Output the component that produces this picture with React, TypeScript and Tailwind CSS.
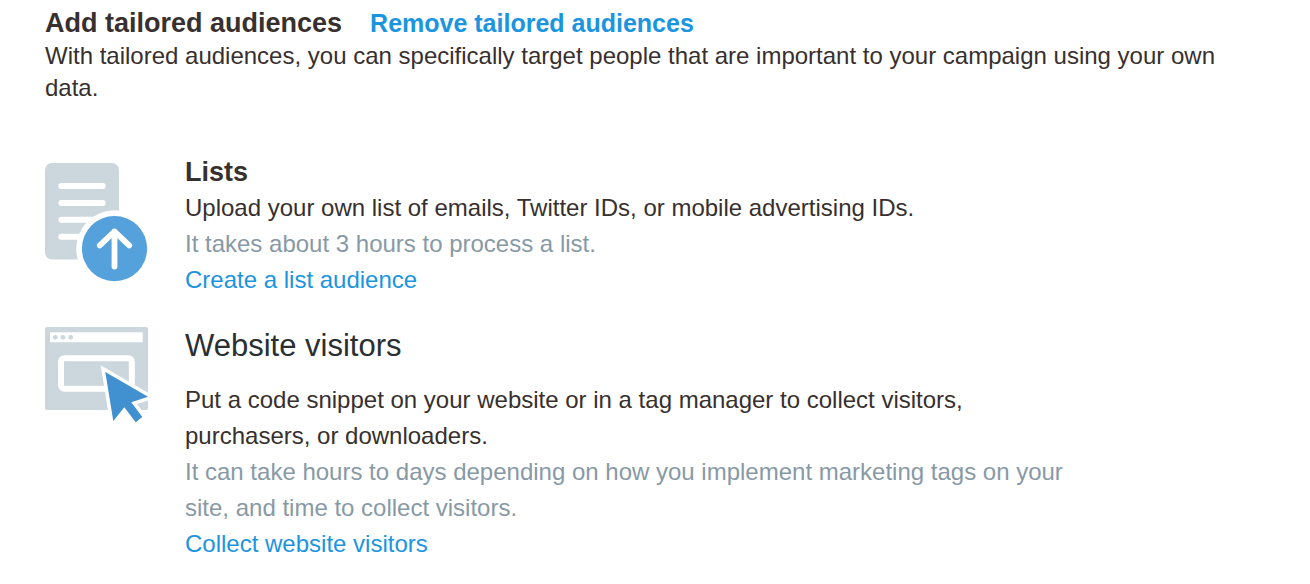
import type { ReactNode } from "react"

interface AudienceOptionProps {
	icon: ReactNode
	title: ReactNode
	description: string
	note: string
	action: string
}

const ListIcon = () => (
	<svg width="103" height="119" viewBox="0 0 103 119" fill="none" aria-hidden="true">
		<rect width="74" height="96.5" rx="7" fill="#ccd6dd" />
		<path
			d="M16.3 23H57.7M16.3 40H57.7M16.3 56.8H57.7M16.3 73.7H57.7"
			stroke="#fff"
			strokeWidth="6"
			strokeLinecap="round"
		/>
		<circle cx="69.5" cy="85.6" r="38.3" fill="#fff" />
		<circle cx="69.5" cy="85.6" r="32.6" fill="#55a1db" />
		<path
			d="M69.5 103.5V68.5M54.8 82.4L69.5 68.5L84.2 82.4"
			stroke="#fff"
			strokeWidth="5.8"
			strokeLinecap="round"
			strokeLinejoin="round"
		/>
	</svg>
)

const WebsiteIcon = () => (
	<svg width="103" height="97" viewBox="0 0 103 97" fill="none" aria-hidden="true">
		<rect width="103" height="83" rx="2" fill="#ccd6dd" />
		<rect x="5" y="5.3" width="92.7" height="10" fill="#fff" />
		<g fill="#ccd6dd">
			<circle cx="10.3" cy="10.3" r="2.4" />
			<circle cx="18" cy="10.3" r="2.4" />
			<circle cx="25.7" cy="10.3" r="2.4" />
		</g>
		<rect x="16" y="31.2" width="70.8" height="30.5" rx="3.5" stroke="#fff" strokeWidth="6" />
		<path
			d="M60.3 45L103 69.7L86.3 75.3L97.3 90L90.7 95.3L79.3 80.3L68.3 94Z"
			fill="#4190d0"
			stroke="#fff"
			strokeWidth="7"
			paintOrder="stroke"
		/>
	</svg>
)

const AudienceOption = ({ icon, title, description, note, action }: AudienceOptionProps) => (
	<section className="flex">
		<div className="w-35 shrink-0 pt-[9px]">{icon}</div>
		<div className="max-w-[900px] text-2xl leading-9">
			{title}
			<p>{description}</p>
			<p className="text-[#8899a6]">{note}</p>
			<a href="#" className="text-[#1b95e0]">
				{action}
			</a>
		</div>
	</section>
)

export default function App() {
	return (
		<main className="bg-white px-[45px] pt-[7px] font-['Liberation_Sans',Arial,sans-serif] text-[#37302f]">
			<header className="mb-px flex items-baseline gap-7 font-bold">
				<h1 className="text-[27px] leading-8">Add tailored audiences</h1>
				<a href="#" className="text-[25px] leading-8 text-[#1b95e0]">
					Remove tailored audiences
				</a>
			</header>
			<p className="text-2xl leading-8">
				With tailored audiences, you can specifically target people that are important to your campaign
				using your own data.
			</p>

			<div className="mt-[50px] flex flex-col gap-5">
				<AudienceOption
					icon={<ListIcon />}
					title={<h2 className="text-[27px] font-bold">Lists</h2>}
					description="Upload your own list of emails, Twitter IDs, or mobile advertising IDs."
					note="It takes about 3 hours to process a list."
					action="Create a list audience"
				/>
				<AudienceOption
					icon={<WebsiteIcon />}
					title={<h2 className="mb-4 pt-2 text-[31px] leading-10 text-[#292f33]">Website visitors</h2>}
					description="Put a code snippet on your website or in a tag manager to collect visitors, purchasers, or downloaders."
					note="It can take hours to days depending on how you implement marketing tags on your site, and time to collect visitors."
					action="Collect website visitors"
				/>
			</div>
		</main>
	)
}
